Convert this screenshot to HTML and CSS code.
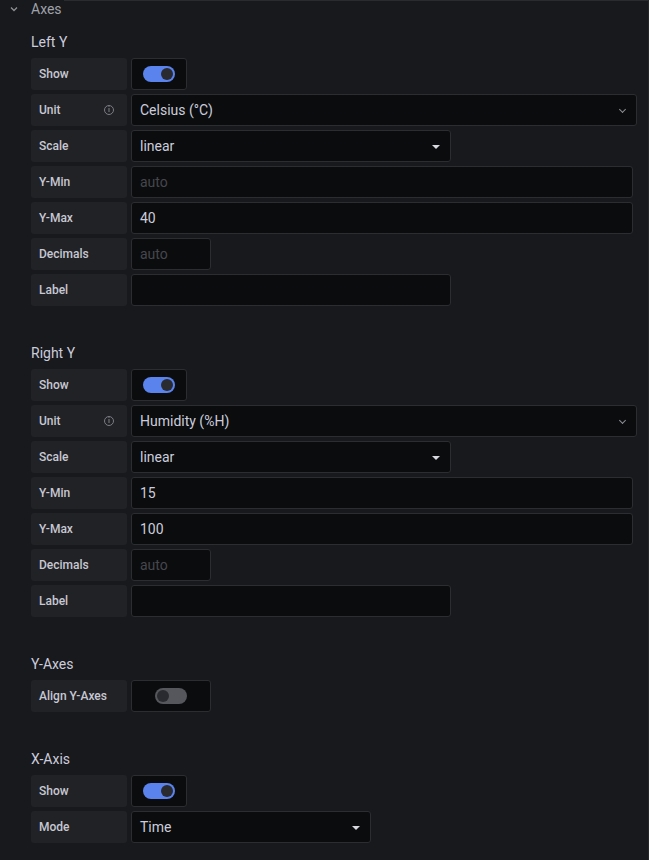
FILE: index.html
```html
<!DOCTYPE html>
<html lang="en">
<head>
    <meta charset="UTF-8">
    <title>Axes</title>
    <link rel="stylesheet" href="styles.css">
</head>
<body>
    <div class="top-line"></div>
    <div class="editor">
        <div class="group-header">
            <svg class="chevron" width="10" height="10" viewBox="0 0 10 10"><path d="M2 3.5 L5 6.5 L8 3.5" fill="none" stroke="#8e8e96" stroke-width="1.3"/></svg>
            <span>Axes</span>
        </div>

        <div class="section">
            <h3>Left Y</h3>
            <div class="row">
                <div class="label">Show</div>
                <div class="field switch-box"><span class="switch on"></span></div>
            </div>
            <div class="row">
                <div class="label">Unit <span class="info">i</span></div>
                <div class="field select w-unit">Celsius (°C)<span class="chev"></span></div>
            </div>
            <div class="row">
                <div class="label">Scale</div>
                <div class="field select w-320">linear<span class="caret"></span></div>
            </div>
            <div class="row">
                <div class="label">Y-Min</div>
                <div class="field w-502 placeholder">auto</div>
            </div>
            <div class="row">
                <div class="label">Y-Max</div>
                <div class="field w-502">40</div>
            </div>
            <div class="row">
                <div class="label">Decimals</div>
                <div class="field w-80 placeholder">auto</div>
            </div>
            <div class="row">
                <div class="label">Label</div>
                <div class="field w-320"></div>
            </div>
        </div>

        <div class="section">
            <h3>Right Y</h3>
            <div class="row">
                <div class="label">Show</div>
                <div class="field switch-box"><span class="switch on"></span></div>
            </div>
            <div class="row">
                <div class="label">Unit <span class="info">i</span></div>
                <div class="field select w-unit">Humidity (%H)<span class="chev"></span></div>
            </div>
            <div class="row">
                <div class="label">Scale</div>
                <div class="field select w-320">linear<span class="caret"></span></div>
            </div>
            <div class="row">
                <div class="label">Y-Min</div>
                <div class="field w-502">15</div>
            </div>
            <div class="row">
                <div class="label">Y-Max</div>
                <div class="field w-502">100</div>
            </div>
            <div class="row">
                <div class="label">Decimals</div>
                <div class="field w-80 placeholder">auto</div>
            </div>
            <div class="row">
                <div class="label">Label</div>
                <div class="field w-320"></div>
            </div>
        </div>

        <div class="section">
            <h3>Y-Axes</h3>
            <div class="row">
                <div class="label">Align Y-Axes</div>
                <div class="field switch-box w-80"><span class="switch"></span></div>
            </div>
        </div>

        <div class="section">
            <h3>X-Axis</h3>
            <div class="row">
                <div class="label">Show</div>
                <div class="field switch-box"><span class="switch on"></span></div>
            </div>
            <div class="row">
                <div class="label">Mode</div>
                <div class="field select w-240">Time<span class="caret"></span></div>
            </div>
        </div>
    </div>
</body>
</html>
```

FILE: styles.css
```css
* {
    margin: 0;
    padding: 0;
    box-sizing: border-box;
}

body {
    background-color: #18191c;
    color: #ccccdc;
    font-family: Roboto, 'Liberation Sans', sans-serif;
    min-height: 860px;
    border-right: 1px solid #25262a;
}

.top-line {
    height: 1px;
    margin-left: 64px;
    background-color: #2a2b2f;
}

.group-header {
    height: 16px;
    display: flex;
    align-items: center;
    font-size: 14px;
    color: #9fa1aa;
}

.chevron {
    margin-left: 9px;
    margin-right: 12px;
}

.section {
    padding-left: 31px;
    margin-top: 39px;
}

.group-header + .section {
    margin-top: 17px;
}

.section h3 {
    font-size: 14px;
    font-weight: 400;
    line-height: 16px;
    margin-bottom: 8px;
    color: #ccccdc;
}

.row {
    display: flex;
    gap: 4px;
    margin-bottom: 4px;
    height: 32px;
}

.label {
    width: 96px;
    background-color: #212226;
    border-radius: 3px;
    padding: 0 8px;
    display: flex;
    align-items: center;
    justify-content: space-between;
    font-size: 12px;
    font-weight: 500;
    color: #c7c8d2;
}

.info {
    width: 10px;
    height: 10px;
    border: 1px solid #7b7c84;
    border-radius: 50%;
    font-size: 7px;
    font-weight: 700;
    line-height: 8px;
    text-align: center;
    color: #7b7c84;
    margin-right: 5px;
}

.field {
    position: relative;
    background-color: #0b0c0e;
    border: 1px solid #2c2d31;
    border-radius: 3px;
    padding: 0 8px;
    display: flex;
    align-items: center;
    font-size: 14px;
    color: #ccccdc;
}

.placeholder {
    color: #46474d;
}

.switch-box {
    width: 56px;
    justify-content: center;
}

.w-80 { width: 80px; }
.w-240 { width: 240px; }
.w-320 { width: 320px; }
.w-502 { width: 502px; }
.w-unit { width: 506px; }

.switch {
    position: relative;
    width: 32px;
    height: 16px;
    border-radius: 8px;
    background-color: #56575c;
}

.switch::after {
    content: "";
    position: absolute;
    top: 2px;
    left: 2px;
    width: 12px;
    height: 12px;
    border-radius: 50%;
    background-color: #2a2b30;
}

.switch.on {
    background-color: #5b83ed;
}

.switch.on::after {
    left: 18px;
}

.caret {
    position: absolute;
    right: 10px;
    top: 14px;
    border-left: 4px solid transparent;
    border-right: 4px solid transparent;
    border-top: 4px solid #d8d9e0;
}

.chev {
    position: absolute;
    right: 11px;
    top: 12px;
    width: 5px;
    height: 5px;
    border-right: 1.5px solid #8e8f96;
    border-bottom: 1.5px solid #8e8f96;
    transform: rotate(45deg);
}
```
